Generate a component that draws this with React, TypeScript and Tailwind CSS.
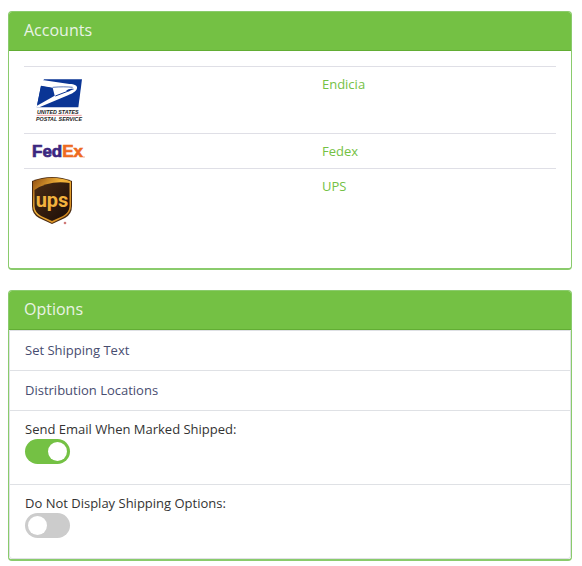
import React from "react";

function UspsLogo() {
  return (
    <svg viewBox="0 0 150 150" className="block w-[50px] h-[50px] overflow-visible" role="img" aria-label="USPS">
      <path d="M36 13H150L139 97H14L27 32Z" fill="#0a3595" />
      <path d="M24 17L36 16L112 27C128 27 137 32 135 40C133 50 120 56 108 61L22 97H13L14 91L60 60L56 38L24 33Z" fill="#fff" />
      <path d="M27 32L62 38L68 62L15 92Z" fill="#0a3595" />
      <path d="M70 63L112 47" fill="none" stroke="#0a3595" strokeWidth="3" />
      <path d="M62 37C84 35 106 35 122 37" fill="none" stroke="#0a3595" strokeWidth="2" />
      <path d="M102 48C108 41 118 40 127 42C122 44 116 45 112 49Z" fill="#0a3595" />
      <text x="15" y="117" fontSize="16" fontWeight="700" fontStyle="italic" fontFamily="Liberation Sans, sans-serif" fill="#222">
        UNITED STATES
      </text>
      <path d="M14 121H149" stroke="#e46a6a" strokeWidth="2" />
      <text x="12" y="137" fontSize="16" fontWeight="700" fontStyle="italic" fontFamily="Liberation Sans, sans-serif" fill="#222">
        POSTAL SERVICE
      </text>
    </svg>
  );
}

function FedexLogo() {
  return (
    <svg viewBox="0 0 54 18" className="block w-[54px] h-[18px] overflow-visible" role="img" aria-label="FedEx">
      <text x="0" y="15" fontSize="17" fontWeight="700" fontFamily="Liberation Sans, sans-serif" strokeWidth="0.7">
        <tspan fill="#3c2680" stroke="#3c2680">Fed</tspan>
        <tspan fill="#ee6a1e" stroke="#ee6a1e">Ex</tspan>
      </text>
      <circle cx="52" cy="15" r="0.7" fill="#ee9a60" />
    </svg>
  );
}

function UpsLogo() {
  return (
    <svg viewBox="0 0 40 48" className="block w-[40px] h-[48px]" role="img" aria-label="UPS">
      <defs>
        <linearGradient id="upsGold" x1="0" y1="0" x2="1" y2="1">
          <stop offset="0" stopColor="#8f4c10" />
          <stop offset="0.4" stopColor="#f4b53a" />
          <stop offset="1" stopColor="#c87c18" />
        </linearGradient>
        <linearGradient id="upsBrown" x1="0" y1="0" x2="1" y2="1">
          <stop offset="0" stopColor="#4a2c14" />
          <stop offset="1" stopColor="#1c0d08" />
        </linearGradient>
      </defs>
      <path d="M0 4Q20 -4 40 4V29Q40 37 33 41L20 47L7 41Q0 37 0 29Z" fill="#4a2a10" />
      <path d="M1 4.5Q20 -3 39 4.5V29Q39 36 32 40L20 46L8 40Q1 36 1 29Z" fill="url(#upsGold)" />
      <path d="M2.500 13Q17 3 37.500 6V29Q37.500 35 31 39L20 44L9 39Q2.500 35 2.500 29Z" fill="url(#upsBrown)" />
      <text x="20" y="30" textAnchor="middle" fontSize="20" fontWeight="700" fontFamily="Roboto, sans-serif" fill="#f2b23e">
        ups
      </text>
      <circle cx="33" cy="46" r="1.300" fill="#d07a78" />
    </svg>
  );
}

const accounts = [
  { name: "Endicia", logo: <UspsLogo /> },
  { name: "Fedex", logo: <FedexLogo /> },
  { name: "UPS", logo: <UpsLogo /> },
];

const links = ["Set Shipping Text", "Distribution Locations"];

const switches = [
  { id: "send-email", label: "Send Email When Marked Shipped:", on: true },
  { id: "hide-shipping", label: "Do Not Display Shipping Options:", on: false },
];

function Panel({ title, children }: { title: string; children: React.ReactNode }) {
  return (
    <section className="mb-5 rounded-[4px] border border-b-2 border-[#8acb6c] bg-white">
      <h2 className="h-[39px] rounded-t-[3px] border-b border-[#62ad34] bg-[#74c144] px-[15px] text-[16px] leading-[36px] text-[#e9f3e4]">
        {title}
      </h2>
      {children}
    </section>
  );
}

export default function App() {
  return (
    <main className="bg-white pt-[11px] pr-[10px] pl-2 font-['Open_Sans',sans-serif] text-[13px] leading-[18px] text-[#333]">
      <Panel title="Accounts">
        <div className="p-[15px]">
          <table className="mb-5 w-full table-fixed border-collapse">
            <colgroup>
              <col className="w-[54.5%]" />
              <col />
            </colgroup>
            <tbody>
              {accounts.map((account) => (
                <tr key={account.name} className="border-t border-[#dfdfe6] align-top">
                  <td className="p-2">{account.logo}</td>
                  <td className="p-2">
                    <a href="#" className="text-[#74c144]">
                      {account.name}
                    </a>
                  </td>
                </tr>
              ))}
            </tbody>
          </table>
        </div>
      </Panel>

      <Panel title="Options">
        <ul className="rounded-b-[3px] border border-[#dfe1e5]">
          {links.map((text) => (
            <li key={text} className="border-b border-[#dfe1e5] px-[15px] py-[10px]">
              <a href="#" className="block leading-[19px] text-[#474d70]">
                {text}
              </a>
            </li>
          ))}
          {switches.map((item) => (
            <li key={item.id} className="border-b border-[#dfe1e5] px-[15px] pt-[9px] pb-5 last:border-b-0">
              <label htmlFor={item.id} className="block pb-px">
                {item.label}
              </label>
              <input
                id={item.id}
                type="checkbox"
                role="switch"
                defaultChecked={item.on}
                className="flex h-[25px] w-[45px] cursor-pointer appearance-none items-center rounded-full bg-[#ccc] px-[3px] before:block before:size-[19px] before:rounded-full before:bg-white before:content-[''] checked:justify-end checked:bg-[#74c144]"
              />
            </li>
          ))}
        </ul>
      </Panel>
    </main>
  );
}
